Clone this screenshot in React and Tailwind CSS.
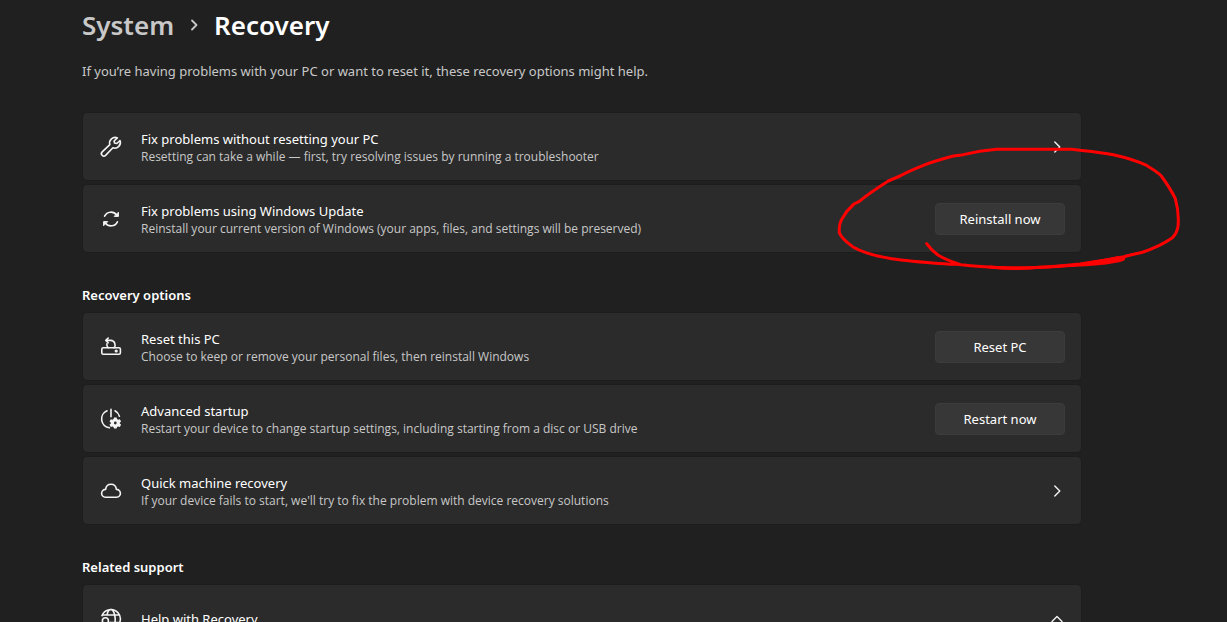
import React from "react";

function Icon({ children }) {
  return (
    <svg
      aria-hidden="true"
      className="size-6 shrink-0 text-[#f4f4f4]"
      viewBox="0 0 24 24"
      fill="none"
      stroke="currentColor"
      strokeWidth="1.6"
      strokeLinecap="round"
      strokeLinejoin="round"
    >
      {children}
    </svg>
  );
}

const WrenchIcon = () => (
  <Icon>
    <path d="M18.4 2.9A5.6 5.6 0 0 0 10.8 9.6L3.2 16.8A2.4 2.4 0 0 0 6.6 20.4L13.9 12.8A5.6 5.6 0 0 0 21 5.5L17.8 8.5L15.5 8L15.1 6Z" />
  </Icon>
);

const SyncIcon = () => (
  <Icon>
    <path d="M5.6 9.2A7 7 0 0 1 17.6 8M18.4 14.8A7 7 0 0 1 6.4 16" />
    <path d="M19.4 5.6V9.4H15.6ZM4.6 18.4V14.6H8.4Z" fill="currentColor" strokeWidth="1" />
  </Icon>
);

const ResetIcon = () => (
  <Icon>
    <rect x="2.8" y="12.8" width="18.6" height="6.4" rx="1.4" />
    <path d="M7 5.4H11.8A4.5 4.5 0 0 1 15 12.8M9.2 3L6.8 5.4L9.2 7.8M7.9 8.8A4.5 4.5 0 0 0 9.2 12.8" />
    <circle cx="17.2" cy="16" r="0.8" fill="currentColor" />
  </Icon>
);

const StartupIcon = () => (
  <Icon>
    <path d="M12 2.4V9.8M8 3.8A8.9 8.9 0 0 0 10.4 20.8M16 3.8A8.9 8.9 0 0 1 20.4 9.2" />
    <g stroke="none" fill="currentColor">
      <circle cx="16.3" cy="16" r="4.2" />
      <path d="M15 10.6H17.6L18.3 12.9L20.8 12.2L22.1 14.4L20.4 16L22.1 17.7L20.8 19.9L18.3 19.2L17.6 21.6H15L14.3 19.2L11.8 19.9L10.5 17.7L12.2 16L10.5 14.4L11.8 12.2L14.3 12.9Z" />
    </g>
    <circle cx="16.3" cy="16" r="1.4" fill="#2b2b2b" stroke="none" />
  </Icon>
);

const CloudIcon = () => (
  <Icon>
    <path d="M6.4 18.2A3.9 3.9 0 0 1 6.6 10.4C7 7.2 9.2 5.2 12 5.2S17 7.2 17.4 10.4A3.9 3.9 0 0 1 17.6 18.2Z" />
  </Icon>
);

const GlobeIcon = () => (
  <Icon>
    <path d="M3 8.6A9.5 9.5 0 1 1 14 21.3M4 8H20.2M10.5 15.5H20.8M8 8C8.6 4.6 10.2 2.5 12 2.5S16.2 6.2 16.2 12S14.6 20.6 12.6 21.4" />
    <circle cx="6.4" cy="13.8" r="3" />
    <path d="M1.6 22V20.6A2 2 0 0 1 3.6 18.8H9A2 2 0 0 1 11 20.6V22" />
  </Icon>
);

function Chevron({ up = false }) {
  return (
    <svg
      aria-hidden="true"
      className="size-4 shrink-0 text-[#f4f4f4]"
      viewBox="0 0 16 16"
      fill="none"
      stroke="currentColor"
      strokeWidth="1.4"
      strokeLinecap="round"
      strokeLinejoin="round"
    >
      <path d={up ? "M3 10.5L8 5.5L13 10.5" : "M5.8 3L10.8 8L5.8 13"} />
    </svg>
  );
}

function CardText({ title, detail }) {
  return (
    <span className="flex min-w-0 flex-1 flex-col">
      <span className="text-[13px] leading-5 text-white">{title}</span>
      {detail && (
        <span className="font-['Open_Sans','Noto_Sans',sans-serif] text-xs leading-4 text-[#c8c8c8]">{detail}</span>
      )}
    </span>
  );
}

const cardClass =
  "flex min-h-[69px] w-full items-center gap-[18px] rounded-[5px] border border-[#1d1d1d] bg-[#2b2b2b] px-4 py-3 text-left";

function ActionCard({ icon, title, detail, action }) {
  return (
    <li className={cardClass}>
      {icon}
      <CardText title={title} detail={detail} />
      <button
        type="button"
        className="h-8 w-[130px] shrink-0 rounded-[4px] border border-[#3c3c3c] bg-[#373737] text-[13px] leading-[18px] text-white"
      >
        {action}
      </button>
    </li>
  );
}

function LinkCard({ icon, title, detail, expanded }) {
  return (
    <li>
      <button type="button" aria-expanded={expanded} className={cardClass}>
        {icon}
        <CardText title={title} detail={detail} />
        <Chevron up={expanded} />
      </button>
    </li>
  );
}

function SectionTitle({ children }) {
  return <h2 className="mt-8 mb-[7px] text-[13px] leading-5 font-semibold text-white">{children}</h2>;
}

function Annotation() {
  return (
    <svg
      aria-hidden="true"
      className="pointer-events-none absolute top-[130px] left-[820px] h-[150px] w-[380px]"
      viewBox="0 0 1140 450"
      fill="none"
      stroke="#ff0000"
      strokeLinecap="round"
      strokeLinejoin="round"
    >
      <path
        strokeWidth="9"
        d="M320 341C332 358 344 368 355 376C375 388 396 396 420 403L390 403C340 399 270 394 215 386C165 378 125 366 98 350C78 335 62 320 58 308C57 290 60 275 67 265C76 249 88 234 102 222L118 214C145 192 175 172 205 153L240 138C268 122 292 114 310 106C340 94 370 86 400 78L430 74C465 65 500 60 530 58H755C800 63 840 66 880 74C920 83 955 94 980 106C990 114 1008 122 1024 138C1040 160 1056 185 1066 206C1074 235 1077 260 1074 290C1071 305 1064 318 1055 325C1030 342 1000 356 970 366C945 372 930 376 912 380C870 388 830 395 780 402C720 409 650 414 590 413C530 414 460 409 410 403"
      />
      <path
        strokeWidth="9"
        d="M510 411C550 416 610 417 660 412C730 408 800 405 850 400C875 396 900 394 911 387L893 383C860 391 830 394 790 402"
      />
      <path strokeWidth="7" d="M800 403L860 395L908 386" />
    </svg>
  );
}

export default function App() {
  return (
    <main className="relative h-screen overflow-hidden bg-[#202020] px-[82px] font-['Noto_Sans',sans-serif]">
      <div className="max-w-[1000px]">
        <nav aria-label="Breadcrumb" className="flex items-center pt-[5px] text-[26px] leading-10 font-semibold">
          <a href="#system" className="text-[#c8c8c8]">System</a>
          <svg
            aria-hidden="true"
            className="mx-3 size-4 text-[#c8c8c8]"
            viewBox="0 0 16 16"
            fill="none"
            stroke="currentColor"
            strokeWidth="1.8"
            strokeLinecap="round"
            strokeLinejoin="round"
          >
            <path d="M6 3.5L10.5 8L6 12.5" />
          </svg>
          <h1 className="text-white">Recovery</h1>
        </nav>
        <p className="mt-4 mb-[31px] text-[13px] leading-5 text-[#c8c8c8]">
          If you’re having problems with your PC or want to reset it, these recovery options might help.
        </p>

        <ul className="flex flex-col gap-[3px]">
          <LinkCard
            icon={<WrenchIcon />}
            title="Fix problems without resetting your PC"
            detail="Resetting can take a while — first, try resolving issues by running a troubleshooter"
          />
          <ActionCard
            icon={<SyncIcon />}
            title="Fix problems using Windows Update"
            detail="Reinstall your current version of Windows (your apps, files, and settings will be preserved)"
            action="Reinstall now"
          />
        </ul>

        <SectionTitle>Recovery options</SectionTitle>
        <ul className="flex flex-col gap-[3px]">
          <ActionCard
            icon={<ResetIcon />}
            title="Reset this PC"
            detail="Choose to keep or remove your personal files, then reinstall Windows"
            action="Reset PC"
          />
          <ActionCard
            icon={<StartupIcon />}
            title="Advanced startup"
            detail="Restart your device to change startup settings, including starting from a disc or USB drive"
            action="Restart now"
          />
          <LinkCard
            icon={<CloudIcon />}
            title="Quick machine recovery"
            detail="If your device fails to start, we'll try to fix the problem with device recovery solutions"
          />
        </ul>

        <SectionTitle>Related support</SectionTitle>
        <ul>
          <LinkCard icon={<GlobeIcon />} title="Help with Recovery" expanded />
        </ul>
      </div>
      <Annotation />
    </main>
  );
}
